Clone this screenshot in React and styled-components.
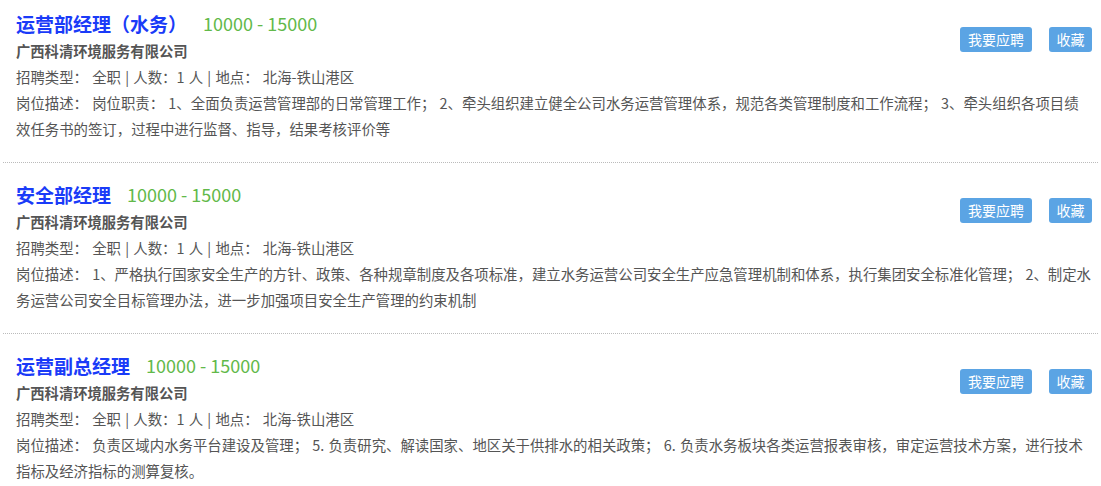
import React from 'react'
import styled, { createGlobalStyle } from 'styled-components'

const GlobalStyle = createGlobalStyle`
  body {
    margin: 0;
    background: #fff;
    font-family: "Noto Sans CJK SC", "Noto Sans", sans-serif;
  }
`

const List = styled.div`
  padding: 0 3px;
`

const Item = styled.div`
  padding: 16px 6px 20px 13px;
  border-bottom: 1px dotted #bbb;

  &:first-child {
    padding-top: 8px;
  }
`

const Header = styled.div`
  display: flex;
  align-items: flex-start;
`

const Info = styled.div`
  flex: 1;
`

const TitleRow = styled.div`
  display: flex;
  align-items: center;
  height: 30px;
`

const Title = styled.span`
  font-size: 19px;
  font-weight: bold;
  color: #1a3bf8;
`

const Salary = styled.span`
  margin-left: 16px;
  font-size: 18px;
  color: #62b94a;
`

const Company = styled.div`
  font-size: 14.3px;
  font-weight: bold;
  color: #555;
  line-height: 26px;
`

const Line = styled.div`
  font-size: 14.4px;
  color: #555;
  line-height: 26px;
  word-spacing: 1px;
`

const Actions = styled.div`
  display: flex;
  gap: 17px;
  padding-top: 19px;
`

const Button = styled.button`
  width: ${p => (p.$wide ? 72 : 43)}px;
  height: 25px;
  padding: 0;
  border: none;
  border-radius: 3px;
  background: #5ba4e4;
  color: #fff;
  font-family: inherit;
  font-size: 14px;
  line-height: 25px;
  cursor: pointer;
`

const jobs = [
  {
    title: '运营部经理（水务）',
    desc: '岗位职责： 1、全面负责运营管理部的日常管理工作； 2、牵头组织建立健全公司水务运营管理体系，规范各类管理制度和工作流程； 3、牵头组织各项目绩效任务书的签订，过程中进行监督、指导，结果考核评价等',
  },
  {
    title: '安全部经理',
    desc: '1、严格执行国家安全生产的方针、政策、各种规章制度及各项标准，建立水务运营公司安全生产应急管理机制和体系，执行集团安全标准化管理； 2、制定水务运营公司安全目标管理办法，进一步加强项目安全生产管理的约束机制',
  },
  {
    title: '运营副总经理',
    desc: '负责区域内水务平台建设及管理； 5. 负责研究、解读国家、地区关于供排水的相关政策； 6. 负责水务板块各类运营报表审核，审定运营技术方案，进行技术指标及经济指标的测算复核。',
  },
]

export default function App() {
  return (
    <>
      <GlobalStyle />
      <List>
        {jobs.map(job => (
          <Item key={job.title}>
            <Header>
              <Info>
                <TitleRow>
                  <Title>{job.title}</Title>
                  <Salary>10000 - 15000</Salary>
                </TitleRow>
                <Company>广西科清环境服务有限公司</Company>
                <Line>招聘类型： 全职 | 人数：1 人 | 地点： 北海-铁山港区</Line>
              </Info>
              <Actions>
                <Button $wide>我要应聘</Button>
                <Button>收藏</Button>
              </Actions>
            </Header>
            <Line>岗位描述： {job.desc}</Line>
          </Item>
        ))}
      </List>
    </>
  )
}
